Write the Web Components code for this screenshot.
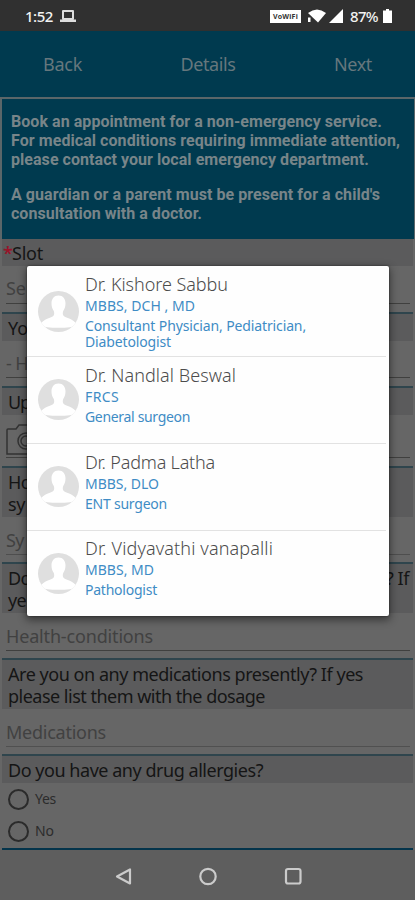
<!DOCTYPE html>
<html lang="en"><head><meta charset="utf-8"><title>Book an appointment</title>
<style>html,body{margin:0;background:#666}</style></head><body>
<booking-app></booking-app>
<script>
const define=(name,css,html,ready)=>customElements.define(name,class extends HTMLElement{
  connectedCallback(){
    if(this.shadowRoot)return;
    const r=this.attachShadow({mode:'open'}),a=n=>this.getAttribute(n)||'';
    r.innerHTML='<style>'+css+'</style>'+(typeof html==='function'?html(a):html);
    if(ready)ready(this,r);
  }
});

/* One line of text, tracked so that it spans the width in its w attribute. */
define('fit-text',':host{display:block;white-space:pre}span{display:inline-block}',a=>`<span>${a('t')}</span>`,(el,r)=>{
  const s=r.querySelector('span'),w=+el.getAttribute('w');
  if(!w)return;
  requestAnimationFrame(()=>{s.style.letterSpacing=(w-s.getBoundingClientRect().width)/s.textContent.length+'px'});
});

define('status-bar',`:host{display:flex;height:31px;background:#303030;color:#f2f2f2;align-items:center;padding:1px 23px 0 25px;box-sizing:border-box;font:500 15px/20px "Noto Sans",sans-serif}
svg{display:block}.l{margin-left:7px}.r{display:flex;align-items:center;margin-left:auto}
.v{background:#fff;color:#333;width:31px;height:13px;font:bold 7px/13px "Noto Sans",sans-serif;text-align:center;margin-right:7px}`,
`<fit-text t="1:52" w="28"></fit-text>
<svg class="l" width="16" height="14" viewBox="0 0 16 14"><path d="M3 2h10v8H3z" fill="none" stroke="#ddd" stroke-width="2" stroke-linejoin="round"/><path d="M0 10.500h16v2.500H0z" fill="#ddd"/></svg>
<div class="r"><div class="v"><fit-text t="VoWiFi" w="25"></fit-text></div>
<svg width="18" height="14" viewBox="0 0 18 14"><path d="M0 4Q9-3 18 4L10 13.500z" fill="#fff"/><path d="M0 8.500h2.500V13H0z" fill="#fff"/></svg>
<svg width="14" height="14" viewBox="0 0 14 14" style="margin:0 7px 0 3px"><path d="M14 0v14H0z" fill="#fff"/></svg>
<fit-text t="87%" w="28"></fit-text>
<svg width="9" height="14" viewBox="0 0 9 14" style="margin-left:5px"><path d="M3 0h3v1.500h3V14H0V1.500h3z" fill="#fff"/></svg></div>`);

define('app-header',`:host{display:flex;height:66px;background:#003a4f;color:#66777d;align-items:center;justify-content:space-between;padding:0 43px;box-sizing:border-box;font:18px/24px "Noto Sans",sans-serif}`,
`<fit-text t="Back" w="39"></fit-text><fit-text t="Details" w="55"></fit-text><fit-text t="Next" w="38"></fit-text>`);

define('info-banner',`:host{display:block;height:142px;box-sizing:border-box;background:#003a4f;border:solid #5b6669;border-width:2px 1px 0 2px;padding:13px 9px;font:bold 16px/19px Roboto,sans-serif;color:#788589}.g{margin-top:16px}`,
`<fit-text t="Book an appointment for a non-emergency service." w="371"></fit-text>
<fit-text t="For medical conditions requiring immediate attention," w="389"></fit-text>
<fit-text t="please contact your local emergency department." w="358"></fit-text>
<fit-text class="g" t="A guardian or a parent must be present for a child's" w="369"></fit-text>
<fit-text t="consultation with a doctor." w="191"></fit-text>`);

/* Question: a shaded label band, then the slotted answer control. */
define('form-question',`:host{display:block;height:var(--h);box-sizing:border-box;margin:0 2px}
.band{height:var(--b);box-sizing:border-box;background:#5b5b5c;border-top:2px solid var(--line,#2f454d);padding:var(--pt,4px) 6px 0;font:18px/21.500px "Noto Sans",sans-serif;color:#151515}
.band.q{padding-left:1px}.row{display:flex}.star{color:#98142a;width:9px;font-weight:600}`,
a=>`<div class="band ${a('req')?'q':''}">${a('req')?'<div class="row"><span class="star">*</span><slot name="label"></slot></div>':'<slot name="label"></slot>'}</div><slot></slot>`);

define('text-input',`:host{display:block;box-sizing:border-box;height:var(--f,38px);margin:0 3px 0 4px;border-bottom:1.500px solid var(--u,#40403f);color:#414141;font:18px/22px "Noto Sans",sans-serif;padding-top:var(--p,12px)}`,`<slot></slot>`);

define('radio-choice',`:host{display:flex;align-items:center;height:32px;padding-left:6px;gap:6px;color:#2c2c2c;font:14px/18px "Noto Sans",sans-serif}i{box-sizing:border-box;width:21px;height:21px;border:2px solid #2b2b2b;border-radius:50%}`,`<i></i><slot></slot>`);

define('nav-bar',`:host{display:flex;height:50px;background:#5e5e5e;align-items:center;justify-content:center}svg{display:block}`,
`<svg width="415" height="50" viewBox="0 0 415 50" fill="none" stroke="#cbcbcb" stroke-width="2.200" stroke-linejoin="round"><path d="M117 26.500l13-7v14z"/><circle cx="208" cy="26.500" r="7.700"/><rect x="286" y="19" width="14.500" height="14.500" rx="2"/></svg>`);

define('doctor-row',`:host{display:flex;box-sizing:border-box;height:var(--h);border-bottom:var(--bb,1.500px) solid #e2e2e2;padding:var(--t,8px) 0 0 11px;margin-right:3px;font-family:"Noto Sans",sans-serif;color:#3f8cc5}
svg{flex:none;margin:var(--a,16px) 6px 0 0}.n{font:300 18px/22px "Noto Sans",sans-serif;color:#4c4c4c;margin-top:-1px;margin-bottom:1px}.d{font-size:14px;line-height:20px}.s{font-size:14px;line-height:16px;padding-top:2px}`,
a=>`<svg width="41" height="41" viewBox="0 0 41 41"><defs><clipPath id="c"><circle cx="20.500" cy="20.500" r="20.500"/></clipPath></defs><circle cx="20.500" cy="20.500" r="20.500" fill="#dfdfdf"/><path clip-path="url(#c)" fill="#fff" d="M20.500 4.500C16 4.500 13.500 8 13.500 12.500c0 3 .8 5 2 7 .8 1.300 1 3.500.3 4.700C14.500 27 6 27 1.500 34 8 37.800 33 37.800 39.500 34 35 27 26.500 27 25.200 24.200c-.7-1.200-.5-3.400.3-4.700 1.200-2 2-4 2-7C27.500 8 25 4.500 20.500 4.500z"/></svg>
<div><fit-text class="n" t="${a('name')}" w="${a('nw')}"></fit-text><fit-text class="d" t="${a('degree')}" w="${a('dw')}"></fit-text><div class="s"><fit-text t="${a('field')}" w="${a('fw')}"></fit-text>${a('field2')?`<fit-text t="${a('field2')}" w="${a('f2w')}"></fit-text>`:''}</div></div>`);

define('doctor-dialog',`:host{position:absolute;left:27px;top:266px;width:362px;height:350px;box-sizing:border-box;padding-top:1px;background:#fefefe;border-radius:2px;box-shadow:0 3px 8px 1px #0007,0 0 2px #0008}`,
`<doctor-row style="--h:90px;--t:7px;--a:17px" name="Dr. Kishore Sabbu" nw="143" degree="MBBS, DCH , MD" dw="110" field="Consultant Physician, Pediatrician," fw="221" field2="Diabetologist" f2w="86"></doctor-row>
<doctor-row style="--h:87px;--a:14px" name="Dr. Nandlal Beswal" nw="151" degree="FRCS" dw="34" field="General surgeon" fw="105"></doctor-row>
<doctor-row style="--h:86.500px;--t:8px;--a:14px" name="Dr. Padma Latha" nw="130" degree="MBBS, DLO" dw="74" field="ENT surgeon" fw="82"></doctor-row>
<doctor-row style="--h:85px;--t:7px;--a:15px;--bb:0" name="Dr. Vidyavathi vanapalli" nw="188" degree="MBBS, MD" dw="69" field="Pathologist" fw="72"></doctor-row>`);

define('booking-app',`:host{display:block;position:relative;width:415px;height:900px;overflow:hidden;background:#666}
.end{height:2px;margin:0 2px;background:#04344b}.split{display:flex;justify-content:space-between;margin-right:-2px}.cam{display:block}`,
`<status-bar></status-bar><app-header></app-header><info-banner></info-banner>
<form-question req="1" style="--h:73px;--b:27px;--line:#5b5b5c;--pt:2px"><fit-text slot="label" t="Slot" w="31"></fit-text><text-input style="--p:11px"><fit-text t="Se" w="20"></fit-text></text-input></form-question>
<form-question style="--h:74px;--b:29px"><fit-text slot="label" t="Yo" w="20"></fit-text><text-input style="--f:37px;--p:11px"><fit-text t="- H" w="22"></fit-text></text-input></form-question>
<form-question style="--h:80px;--b:29px"><fit-text slot="label" t="Up" w="22"></fit-text><text-input style="--f:43px;--p:9px"><svg class="cam" width="44" height="33" viewBox="0 0 44 33" fill="none" stroke="#333" stroke-width="1.500"><path d="M1 6q0-1 1-1h8l3-4h14l3 4h8v25H1z"/><circle cx="20" cy="17" r="8"/><circle cx="20" cy="17" r="5"/></svg></text-input></form-question>
<form-question style="--h:96px;--b:51px"><div slot="label"><fit-text t="Ho" w="23"></fit-text><fit-text t="sy" w="17"></fit-text></div><text-input style="--u:#4e4e4e"><fit-text t="Sy" w="18"></fit-text></text-input></form-question>
<form-question style="--h:96px;--b:51px"><div slot="label"><div class="split"><fit-text t="Do" w="23"></fit-text><fit-text t="? If" w="23"></fit-text></div><fit-text t="ye" w="18"></fit-text></div><text-input><fit-text t="Health-conditions" w="147"></fit-text></text-input></form-question>
<form-question style="--h:96px;--b:51px"><div slot="label"><fit-text t="Are you on any medications presently? If yes" w="355"></fit-text><fit-text t="please list them with the dosage" w="257"></fit-text></div><text-input style="--u:#505050"><fit-text t="Medications" w="100"></fit-text></text-input></form-question>
<form-question style="--h:94px;--b:29px"><fit-text slot="label" t="Do you have any drug allergies?" w="255"></fit-text><radio-choice><fit-text t="Yes" w="21"></fit-text></radio-choice><radio-choice><fit-text t="No" w="19"></fit-text></radio-choice></form-question>
<div class="end"></div><nav-bar></nav-bar><doctor-dialog></doctor-dialog>`);
</script></body></html>
